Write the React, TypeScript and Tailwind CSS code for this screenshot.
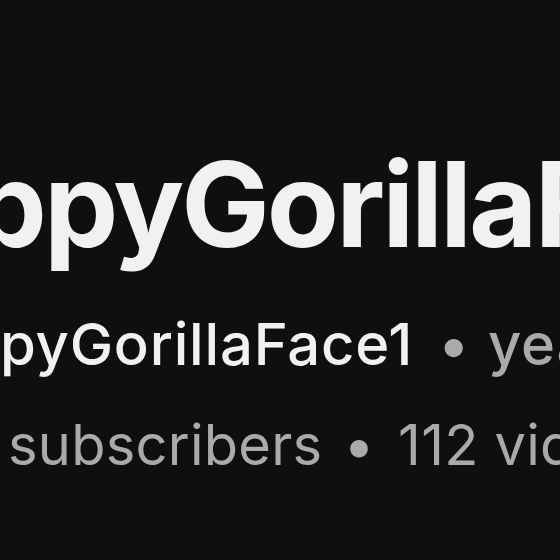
import React from "react";

const Prefix = ({ text, width }: { text: string; width: string }) => (
    <span className={`inline-block shrink-0 whitespace-pre text-right ${width}`}>{text}</span>
);

const App = () => {
    return (
        <div className="w-[560px] h-[560px] overflow-hidden bg-[#0f0f0f] font-['Inter','Liberation_Sans',sans-serif]">
            <div className="flex flex-col pt-[145px]">
                {/* channel name */}
                <div className="flex whitespace-nowrap ml-[-260px] text-[118px] leading-[118px] font-bold tracking-[-3px] text-[#f1f1f1]">
                    <Prefix text="Hap" width="w-[304px]" />
                    <span>pyGorillaFace</span>
                </div>

                {/* handle + joined */}
                <div className="flex whitespace-nowrap ml-[-300px] mt-[52px] text-[58px] leading-[58px] font-medium tracking-[0.8px] text-[#f1f1f1]">
                    <Prefix text="@Hap" width="w-[300px]" />
                    <span>pyGorillaFace1</span>
                    <span className="text-[#aaaaaa] ml-[25px]">•</span>
                    <span className="text-[#aaaaaa] ml-[18px]">years ago</span>
                </div>

                {/* stats */}
                <div className="flex whitespace-nowrap ml-[-300px] mt-[44px] text-[56px] leading-[56px] font-normal tracking-[0.25px] text-[#aaaaaa]">
                    <Prefix text="2.4K " width="w-[308px]" />
                    <span>subscribers</span>
                    <span className="ml-[21px]">•</span>
                    <span className="ml-[23px]">112 videos</span>
                </div>
            </div>
        </div>
    );
};

export default App;
